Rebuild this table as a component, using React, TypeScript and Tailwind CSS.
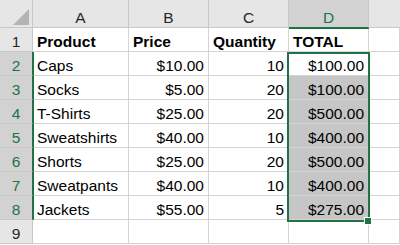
const rows = [
  ["Caps", "$10.00", "10", "$100.00"],
  ["Socks", "$5.00", "20", "$100.00"],
  ["T-Shirts", "$25.00", "20", "$500.00"],
  ["Sweatshirts", "$40.00", "10", "$400.00"],
  ["Shorts", "$25.00", "20", "$500.00"],
  ["Sweatpants", "$40.00", "10", "$400.00"],
  ["Jackets", "$55.00", "5", "$275.00"],
];

const cols = ["A", "B", "C", "D"];

function Cell({
  children,
  right,
  bold,
  fill,
}: {
  children?: React.ReactNode;
  right?: boolean;
  bold?: boolean;
  fill?: boolean;
}) {
  return (
    <div
      className={`flex items-end overflow-hidden whitespace-nowrap border-r border-b border-[#d4d4d4] px-[4px] pb-[2px] leading-none text-black ${
        right ? "justify-end" : "justify-start"
      } ${bold ? "font-bold" : ""} ${fill ? "bg-[#c6c6c6]" : "bg-white"}`}
    >
      {children}
    </div>
  );
}

function RowHead({ n, active }: { n: number; active?: boolean }) {
  return (
    <div
      className={`relative z-10 flex items-end justify-center border-b border-[#c8c8c8] pb-[2px] leading-none ${
        active
          ? "border-r border-r-[#217346] bg-[#d2d2d2] text-[#217346] shadow-[1px_0_0_#217346]"
          : "border-r border-r-[#c8c8c8] bg-[#e6e6e6] text-[#262626]"
      }`}
    >
      {n}
    </div>
  );
}

export default function App() {
  return (
    <div
      className="relative h-[245px] w-[400px] overflow-hidden bg-white text-[15.5px]"
      style={{ fontFamily: '"Liberation Sans", Arial, sans-serif' }}
    >
      <div className="grid grid-cols-[33px_96px_80px_80px_80px_1fr] grid-rows-[28px_repeat(9,24px)]">
        {/* corner */}
        <div className="relative border-r border-b border-[#c8c8c8] bg-[#e6e6e6]">
          <svg className="absolute left-0 top-0" width="33" height="28">
            <polygon points="29,9 29,25 13,25" fill="#b4b4b4" />
          </svg>
        </div>
        {cols.map((c) => (
          <div
            key={c}
            className={`relative z-10 flex items-end justify-center border-r border-b border-r-[#c8c8c8] pb-[2px] leading-none ${
              c === "D"
                ? "border-b-[#217346] bg-[#d2d2d2] text-[#217346] shadow-[0_1px_0_#217346]"
                : "border-b-[#c8c8c8] bg-[#e6e6e6] text-[#262626]"
            }`}
          >
            {c}
          </div>
        ))}
        <div className="border-b border-[#c8c8c8] bg-[#e6e6e6]" />

        {/* row 1 */}
        <RowHead n={1} />
        <Cell bold>Product</Cell>
        <Cell bold>Price</Cell>
        <Cell bold>Quantity</Cell>
        <Cell bold>TOTAL</Cell>
        <Cell />

        {rows.map((r, i) => (
          <div key={r[0]} className="contents">
            <RowHead n={i + 2} active />
            <Cell>{r[0]}</Cell>
            <Cell right>{r[1]}</Cell>
            <Cell right>{r[2]}</Cell>
            <Cell right fill={i > 0}>
              {r[3]}
            </Cell>
            <Cell />
          </div>
        ))}

        {/* row 9 */}
        <RowHead n={9} />
        <Cell />
        <Cell />
        <Cell />
        <Cell />
        <Cell />
      </div>

      {/* selection outline */}
      <div className="pointer-events-none absolute left-[287px] top-[52px] h-[170px] w-[83px] border-2 border-[#217346]" />
      <div className="absolute left-[364px] top-[217px] h-[8px] w-[8px] border border-white bg-[#217346]" />
    </div>
  );
}
